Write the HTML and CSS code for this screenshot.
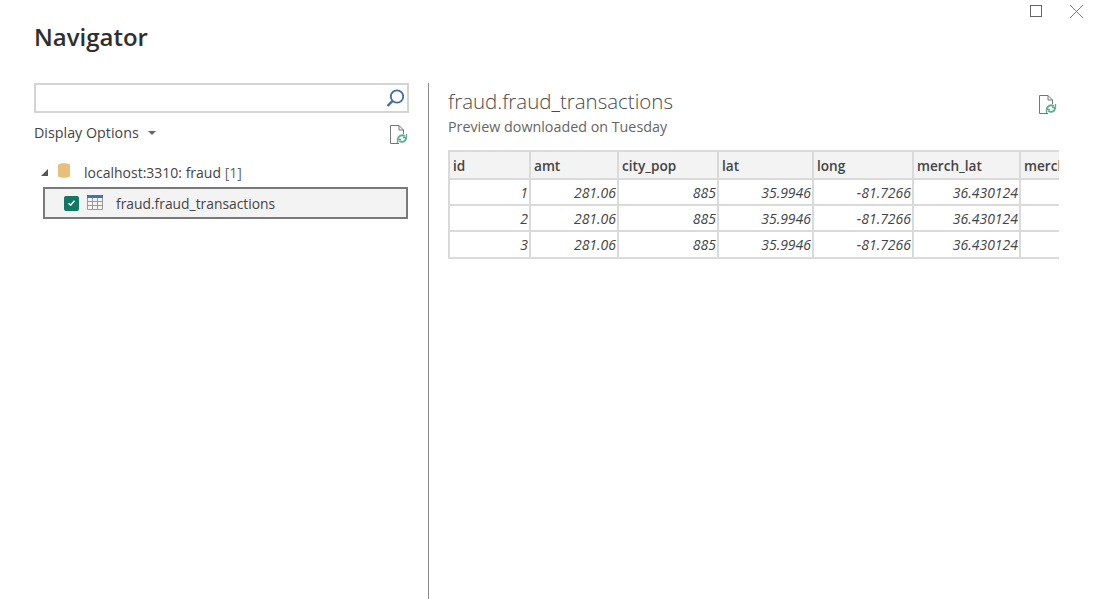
FILE: index.html
```html
<!DOCTYPE html>
<html lang="en">
<head>
<meta charset="utf-8">
<title>Navigator</title>
<link rel="stylesheet" href="styles.css">
</head>
<body>
<div class="app">
  <div class="window-controls">
    <svg class="win-icon" width="13" height="13" viewBox="0 0 13 13"><rect x="1.5" y="1.5" width="11" height="11" fill="none" stroke="#666" stroke-width="1"/></svg>
    <svg class="win-icon" width="15" height="15" viewBox="0 0 15 15"><path d="M1 1L14 14M14 1L1 14" fill="none" stroke="#777" stroke-width="1"/></svg>
  </div>
  <h1 class="title">Navigator</h1>
  <div class="main">
    <section class="left">
      <div class="search">
        <svg width="20" height="20" viewBox="0 0 20 20"><circle cx="11" cy="8.500" r="6.200" fill="none" stroke="#3a6ea5" stroke-width="1.800"/><path d="M6.500 13L1.500 18" stroke="#3a6ea5" stroke-width="2.400" fill="none"/></svg>
      </div>
      <div class="options">
        <span class="options-label">Display Options</span>
        <span class="caret"></span>
        <svg class="refresh" width="20" height="22" viewBox="0 0 20 22"><path d="M11 19.5H2.5V1.5H11L15.5 6V10M11 1.5V6H15.5" fill="none" stroke="#777" stroke-width="1"/><path d="M10 15a4 4 0 0 1 6.800-2.600M18 14a4 4 0 0 1-6.800 2.700" fill="none" stroke="#5fae94" stroke-width="1.900"/><path d="M18.500 10v3.500H15M9.500 19v-3.500H13" fill="none" stroke="#5fae94" stroke-width="1.300"/></svg>
      </div>
      <div class="tree-root">
        <span class="expander"></span>
        <svg class="db" width="12" height="17" viewBox="0 0 12 17"><path d="M0 3C0 .6 12 .6 12 3V14C12 16.400 0 16.400 0 14Z" fill="#e8c07d"/></svg>
        <span class="tree-label">localhost:3310: fraud <span class="count">[1]</span></span>
      </div>
      <div class="tree-item">
        <span class="check"><svg width="9" height="8" viewBox="0 0 9 8"><path d="M1.500 4.200L3.600 6.200L7.500 1.800" fill="none" stroke="#fff" stroke-width="1.500"/></svg></span>
        <svg class="grid-icon" width="16" height="15" viewBox="0 0 16 15"><rect x="0" y="0" width="16" height="3" fill="#3f74ad"/><path d="M.5 3V14.500H15.500V3M.5 6.500H15.500M.5 10.500H15.500M5.500 3V14.500M10.500 3V14.500" fill="none" stroke="#9a9a9a" stroke-width="1"/></svg>
        <span class="tree-label item-label">fraud.fraud_transactions</span>
      </div>
    </section>
    <section class="right">
      <div class="preview-head">
        <div>
          <h2 class="preview-title">fraud.fraud_transactions</h2>
          <p class="preview-sub">Preview downloaded on Tuesday</p>
        </div>
        <svg class="refresh" width="20" height="22" viewBox="0 0 20 22"><path d="M11 19.500H2.500V1.500H11L15.500 6V10M11 1.500V6H15.500" fill="none" stroke="#777" stroke-width="1"/><path d="M10 15a4 4 0 0 1 6.800-2.600M18 14a4 4 0 0 1-6.800 2.700" fill="none" stroke="#5fae94" stroke-width="1.900"/><path d="M18.500 10v3.500H15M9.500 19v-3.500H13" fill="none" stroke="#5fae94" stroke-width="1.300"/></svg>
      </div>
      <div class="table-clip">
        <table class="data">
          <colgroup>
            <col class="c-id"><col class="c-amt"><col class="c-pop"><col class="c-lat"><col class="c-long"><col class="c-mlat"><col class="c-mlong">
          </colgroup>
          <thead>
            <tr><th>id</th><th>amt</th><th>city_pop</th><th>lat</th><th>long</th><th>merch_lat</th><th>merch_long</th></tr>
          </thead>
          <tbody>
            <tr><td>1</td><td>281.06</td><td>885</td><td>35.9946</td><td>-81.7266</td><td>36.430124</td><td></td></tr>
            <tr><td>2</td><td>281.06</td><td>885</td><td>35.9946</td><td>-81.7266</td><td>36.430124</td><td></td></tr>
            <tr><td>3</td><td>281.06</td><td>885</td><td>35.9946</td><td>-81.7266</td><td>36.430124</td><td></td></tr>
          </tbody>
        </table>
      </div>
    </section>
  </div>
</div>
</body>
</html>
```
FILE: styles.css
```css
* { box-sizing: border-box; }
html, body { margin: 0; height: 100%; background: #fff; overflow: hidden; }
body { font-family: "Open Sans", "Noto Sans", "Liberation Sans", sans-serif; color: #444; }
.app { height: 599px; display: flex; flex-direction: column; position: relative; }
.window-controls { position: absolute; top: 4px; right: 10px; display: flex; align-items: flex-start; gap: 27px; }
.win-icon { display: block; }
.title { margin: 0; height: 83px; padding: 23px 0 0 34px; font-size: 24px; line-height: 28px; font-weight: 600; color: #2f2f2f; }
.main { flex: 1; display: flex; min-height: 0; }
.left { width: 394px; margin-left: 34px; display: flex; flex-direction: column; }
.search { width: 375px; height: 30px; border: 2px solid #d4d4d4; display: flex; justify-content: flex-end; align-items: center; padding-right: 1px; }
.options { width: 375px; height: 31px; margin-top: 4px; display: flex; align-items: center; }
.options-label { font-size: 14.3px; color: #444; }
.caret { width: 0; height: 0; margin-left: 9px; border: 4px solid transparent; border-top-color: #666; border-bottom: 0; }
.options .refresh { margin-left: auto; margin-right: 1px; margin-top: 4px; }
.refresh { display: block; flex: none; }
.tree-root { height: 28px; margin-top: 10px; display: flex; align-items: center; padding-left: 7px; }
.expander { width: 0; height: 0; border-left: 7px solid transparent; border-bottom: 7px solid #555; }
.db { margin-left: 10px; margin-top: -4px; flex: none; }
.tree-label { font-size: 14px; color: #444; }
.tree-root .tree-label { margin-left: 14px; }
.count { color: #666; }
.tree-item { width: 365px; height: 32px; margin-left: 9px; margin-top: 1px; border: 2px solid #7a7a7a; background: #f3f3f3; display: flex; align-items: center; padding-left: 19px; }
.check { width: 15px; height: 15px; border-radius: 2px; background: #117865; display: flex; align-items: center; justify-content: center; flex: none; }
.grid-icon { margin-left: 8px; margin-top: -1px; flex: none; }
.tree-item .item-label { margin-left: 13px; font-size: 13.85px; }
.right { flex: 1; min-width: 0; border-left: 1px solid #8c8c8c; padding-left: 19px; }
.preview-head { width: 610px; height: 67px; display: flex; justify-content: space-between; align-items: flex-start; }
.preview-title { margin: 4px 0 0; font-size: 20.5px; line-height: 28px; font-weight: 300; color: #4a4a4a; }
.preview-sub { margin: 2px 0 0; font-size: 14.3px; line-height: 20px; color: #666; }
.preview-head .refresh { margin-top: 11px; margin-right: 1px; }
.table-clip { width: 611px; overflow: hidden; }
.data { table-layout: fixed; width: 700px; border-collapse: collapse; font-size: 14px; }
.c-id { width: 81px; } .c-amt { width: 88px; } .c-pop { width: 100px; } .c-lat { width: 95px; } .c-long { width: 100px; } .c-mlat { width: 107px; } .c-mlong { width: 129px; }
.data th, .data td { border: 2px solid #dadada; overflow: hidden; white-space: nowrap; }
.data th { height: 28px; padding: 0 2px 0 3px; text-align: left; background: #f3f3f3; font-weight: 600; color: #444; font-size: 13.6px; }
.data td { height: 26px; padding: 0 1px 0 2px; text-align: right; font-style: italic; color: #444; }
.data tbody tr:last-child td { height: 27px; }
```
